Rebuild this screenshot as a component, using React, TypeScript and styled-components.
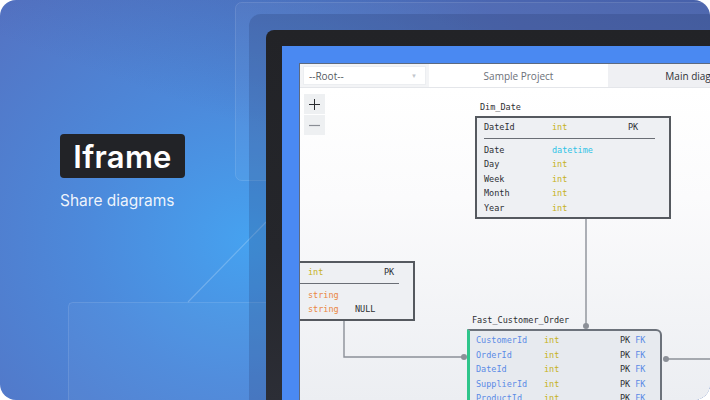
import styled, { createGlobalStyle } from "styled-components";

const GlobalStyle = createGlobalStyle`
    html, body {
        margin: 0;
        padding: 0;
        background: #ffffff;
    }
`;

const Card = styled.div`
    position: relative;
    width: 710px;
    height: 400px;
    border-radius: 16px;
    overflow: hidden;
    display: flex;
    background-color: #5473c3;
    background-image:
        linear-gradient(200deg, rgba(55, 75, 140, 0.45) 0%, rgba(55, 75, 140, 0) 45%),
        radial-gradient(ellipse 360px 320px at 250px 240px, #46a2f0 0%, rgba(72, 150, 232, 0.65) 45%, rgba(84, 115, 195, 0) 100%);
`;

const Decor = styled.svg`
    position: absolute;
    inset: 0;
    width: 710px;
    height: 400px;
    pointer-events: none;
`;

const Intro = styled.div`
    position: relative;
    z-index: 1;
    flex: none;
    width: 249px;
    box-sizing: border-box;
    padding: 134px 0 0 60px;
    display: flex;
    flex-direction: column;
    align-items: flex-start;
`;

const Badge = styled.div`
    height: 44px;
    width: 125px;
    box-sizing: border-box;
    display: flex;
    align-items: center;
    justify-content: center;
    background: #222327;
    border-radius: 4px;
    color: #ffffff;
    font-family: Inter, "Open Sans", sans-serif;
    font-weight: 600;
    font-size: 31px;
    letter-spacing: 0.3px;
`;

const Tagline = styled.div`
    margin-top: 13px;
    color: rgba(255, 255, 255, 0.92);
    font-family: Inter, "Open Sans", sans-serif;
    font-size: 15.5px;
    font-weight: 400;
`;

const ShadowLayer = styled.div`
    position: relative;
    z-index: 1;
    flex: none;
    width: 520px;
    margin-top: 14px;
    box-sizing: border-box;
    padding: 16px 0 0 17px;
    border-radius: 12px 0 0 0;
    background: rgba(30, 50, 100, 0.22);
    display: flex;
`;

const DeviceFrame = styled.div`
    flex: 1;
    box-sizing: border-box;
    padding: 16px 0 0 16px;
    border-radius: 8px 0 0 0;
    background: linear-gradient(180deg, #222327 0%, #25262b 60%, #2c2e36 100%);
    display: flex;
`;

const BlueFrame = styled.div`
    flex: 1;
    box-sizing: border-box;
    padding: 17px 0 0 17px;
    background: #4a89f2;
    display: flex;
`;

const AppWindow = styled.div`
    flex: 1;
    display: flex;
    flex-direction: column;
    background: #ffffff;
    border-top: 1px solid #5d6a80;
    border-left: 1px solid #5d6a80;
    overflow: hidden;
`;

const TopBar = styled.div`
    flex: none;
    height: 23px;
    display: flex;
    align-items: center;
    background: #f3f4f6;
    border-bottom: 1px solid #e4e6ea;
    font-family: "Open Sans", sans-serif;
    font-size: 10px;
`;

const RootSelect = styled.div`
    width: 123px;
    height: 19px;
    margin-left: 3px;
    box-sizing: border-box;
    padding: 0 8px 0 5px;
    display: flex;
    align-items: center;
    justify-content: space-between;
    background: #ffffff;
    border: 1px solid #eceef1;
    color: #555a61;
`;

const Caret = styled.span`
    color: #c2c6cc;
    font-size: 6px;
`;

const Tab = styled.div<{ $active?: boolean }>`
    width: 179px;
    height: 100%;
    margin-left: ${(p) => (p.$active ? "3px" : "0")};
    display: flex;
    align-items: center;
    justify-content: center;
    background: ${(p) => (p.$active ? "#ffffff" : "#eff0f3")};
    color: ${(p) => (p.$active ? "#6b7078" : "#2f3237")};
    white-space: nowrap;
`;

const Canvas = styled.div`
    position: relative;
    flex: 1;
    background: linear-gradient(180deg, #ffffff 0%, #fbfbfc 35%, #eceef2 100%);
`;

const ZoomStack = styled.div`
    display: flex;
    flex-direction: column;
    width: 21px;
    margin: 6px 0 0 4px;
    gap: 1px;
`;

const ZoomButton = styled.div`
    width: 21px;
    height: 20px;
    display: flex;
    align-items: center;
    justify-content: center;
    background: #eef0f2;
`;

const Wires = styled.svg`
    position: absolute;
    left: 0;
    top: 0;
    width: 480px;
    height: 320px;
    overflow: visible;
`;

const Node = styled.div<{ $x: number; $y: number; $w: number }>`
    position: absolute;
    left: ${(p) => p.$x}px;
    top: ${(p) => p.$y}px;
    width: ${(p) => p.$w}px;
    font-family: "DejaVu Sans Mono", "Liberation Mono", monospace;
    font-size: 8.5px;
    color: #2d2f33;
`;

const NodeLabel = styled.div`
    height: 17px;
    line-height: 17px;
    padding-left: 5px;
    white-space: nowrap;
`;

const NodeBox = styled.div<{ $fact?: boolean }>`
    box-sizing: border-box;
    padding: 2px 0 2px 7px;
    background: ${(p) => (p.$fact ? "#e7eaef" : "#eef0f3")};
    border: 2px solid ${(p) => (p.$fact ? "#6c727b" : "#55595f")};
    border-left: ${(p) => (p.$fact ? "3px solid #2fc58b" : "2px solid #55595f")};
    border-radius: ${(p) => (p.$fact ? "0 6px 0 0" : "0")};
    padding-left: ${(p) => (p.$fact ? "6px" : "7px")};
`;

const Row = styled.div`
    display: grid;
    grid-template-columns: 68px 76px auto;
    height: 14.5px;
    line-height: 14.5px;
    white-space: nowrap;
`;

const Divider = styled.div`
    height: 1px;
    margin: 3.5px 14px 3.5px 0;
    background: #6a6e75;
`;

const Name = styled.span<{ $key?: boolean }>`
    color: ${(p) => (p.$key ? "#5b8be6" : "#2d2f33")};
`;

const typeColors: Record<string, string> = {
    int: "#c6b21c",
    datetime: "#2fc3e6",
    string: "#ea8643",
};

const Type = styled.span<{ $kind: string }>`
    color: ${(p) => typeColors[p.$kind] ?? "#2d2f33"};
`;

const TypeText = styled.span`
    display: inline-block;
    min-width: 47px;
`;

const NullMark = styled.span`
    color: #2d2f33;
`;

const Keys = styled.span`
    color: #2d2f33;
`;

const Fk = styled.span`
    margin-left: 5px;
    color: #5b8be6;
`;

type Column = { name: string; type: string; pk?: boolean; fk?: boolean; nullable?: boolean };

function ColumnRow({ col, fact }: { col: Column; fact?: boolean }) {
    return (
        <Row>
            <Name $key={fact}>{col.name}</Name>
            <Type $kind={col.type}>
                <TypeText>{col.type}</TypeText>
                {col.nullable && <NullMark>NULL</NullMark>}
            </Type>
            <Keys>
                {col.pk && "PK"}
                {col.fk && <Fk>FK</Fk>}
            </Keys>
        </Row>
    );
}

function Table({ x, y, w, title, keys, cols, fact }: {
    x: number; y: number; w: number; title: string; keys: Column[]; cols: Column[]; fact?: boolean;
}) {
    return (
        <Node $x={x} $y={y} $w={w}>
            <NodeLabel>{title}</NodeLabel>
            <NodeBox $fact={fact}>
                {keys.map((c) => <ColumnRow key={c.name} col={c} fact={fact} />)}
                {cols.length > 0 && <Divider />}
                {cols.map((c) => <ColumnRow key={c.name} col={c} />)}
            </NodeBox>
        </Node>
    );
}

const dimDate = {
    keys: [{ name: "DateId", type: "int", pk: true }],
    cols: [
        { name: "Date", type: "datetime" },
        { name: "Day", type: "int" },
        { name: "Week", type: "int" },
        { name: "Month", type: "int" },
        { name: "Year", type: "int" },
    ],
};

const dimProduct = {
    keys: [{ name: "ProductId", type: "int", pk: true }],
    cols: [
        { name: "Name", type: "string" },
        { name: "Category", type: "string", nullable: true },
    ],
};

const factOrder = {
    keys: [
        { name: "CustomerId", type: "int", pk: true, fk: true },
        { name: "OrderId", type: "int", pk: true, fk: true },
        { name: "DateId", type: "int", pk: true, fk: true },
        { name: "SupplierId", type: "int", pk: true, fk: true },
        { name: "ProductId", type: "int", pk: true, fk: true },
    ],
    cols: [],
};

export default function App() {
    return (
        <>
            <GlobalStyle />
            <Card>
                <Decor viewBox="0 0 710 400">
                    <rect x="235.5" y="2.5" width="520" height="178" rx="6" fill="rgba(255,255,255,0.04)" stroke="rgba(255,255,255,0.12)" />
                    <rect x="68.5" y="302.5" width="700" height="200" rx="4" fill="rgba(255,255,255,0.03)" stroke="rgba(255,255,255,0.12)" />
                    <line x1="188" y1="302" x2="266" y2="222" stroke="rgba(255,255,255,0.22)" strokeWidth="1.2" />
                </Decor>
                <Intro>
                    <Badge>Iframe</Badge>
                    <Tagline>Share diagrams</Tagline>
                </Intro>
                <ShadowLayer>
                    <DeviceFrame>
                        <BlueFrame>
                            <AppWindow>
                                <TopBar>
                                    <RootSelect>
                                        --Root--
                                        <Caret>▼</Caret>
                                    </RootSelect>
                                    <Tab $active>Sample Project</Tab>
                                    <Tab>Main diagram</Tab>
                                </TopBar>
                                <Canvas>
                                    <Wires>
                                        <g stroke="#8c9098" strokeWidth="1.4" fill="none">
                                            <path d="M286 129 V238" />
                                            <path d="M44 232 V269 H164" />
                                            <path d="M366 271 H480" />
                                        </g>
                                        <g fill="#8c9098">
                                            <circle cx="286" cy="238" r="3" />
                                            <circle cx="164" cy="269" r="3" />
                                            <circle cx="366" cy="271" r="3" />
                                        </g>
                                    </Wires>
                                    <ZoomStack>
                                        <ZoomButton>
                                            <svg width="13" height="13" viewBox="0 0 13 13">
                                                <path d="M6.5 1 V12 M1 6.5 H12" stroke="#2a2c30" strokeWidth="1" />
                                            </svg>
                                        </ZoomButton>
                                        <ZoomButton>
                                            <svg width="13" height="13" viewBox="0 0 13 13">
                                                <path d="M1 6.5 H12" stroke="#8a8e95" strokeWidth="1.2" />
                                            </svg>
                                        </ZoomButton>
                                    </ZoomStack>
                                    <Table x={175} y={11} w={196} title="Dim_Date" keys={dimDate.keys} cols={dimDate.cols} />
                                    <Table x={-69} y={156} w={184} title="Dim_Product" keys={dimProduct.keys} cols={dimProduct.cols} />
                                    <Table x={167} y={224} w={195} title="Fast_Customer_Order" keys={factOrder.keys} cols={factOrder.cols} fact />
                                </Canvas>
                            </AppWindow>
                        </BlueFrame>
                    </DeviceFrame>
                </ShadowLayer>
            </Card>
        </>
    );
}
